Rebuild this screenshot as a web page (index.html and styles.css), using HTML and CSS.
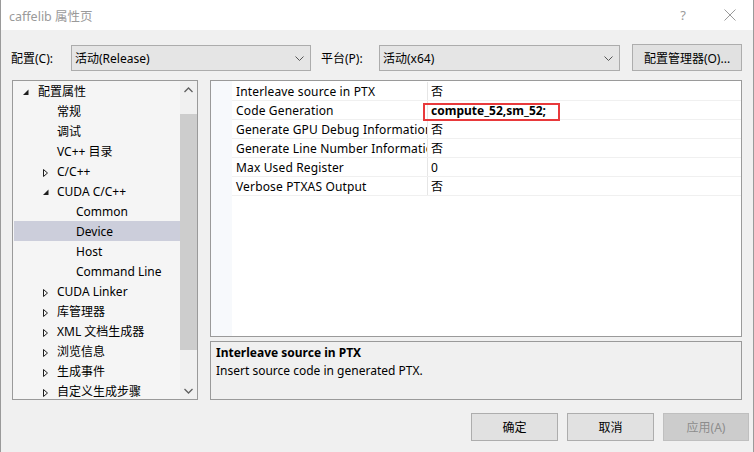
FILE: index.html
```html
<!DOCTYPE html>
<html>
<head>
<meta charset="utf-8">
<link rel="stylesheet" href="styles.css">
</head>
<body>
<div class="dialog">
  <div class="titlebar">
    <span class="title">caffelib 属性页</span>
    <span class="help">?</span>
    <svg class="close" width="12" height="12" viewBox="0 0 12 12"><path d="M0.5 0.5 L11.5 11.5 M11.5 0.5 L0.5 11.5" stroke="#9a9a9a" stroke-width="1" fill="none"/></svg>
  </div>
  <div class="body">
    <div class="toolbar">
      <span class="label l1">配置(C):</span>
      <div class="select s1"><span>活动(Release)</span><svg class="chev" width="9" height="5" viewBox="0 0 9 5"><path d="M0.5 0.5 L4.5 4.5 L8.5 0.5" stroke="#555" fill="none"/></svg></div>
      <span class="label l2">平台(P):</span>
      <div class="select s2"><span>活动(x64)</span><svg class="chev" width="9" height="5" viewBox="0 0 9 5"><path d="M0.5 0.5 L4.5 4.5 L8.5 0.5" stroke="#555" fill="none"/></svg></div>
      <div class="btn mgr">配置管理器(O)...</div>
    </div>
    <div class="main">
      <div class="tree">
        <div class="items">
          <div class="row lvl0"><span class="tw"><svg width="19" height="20"><polygon points="4,14 9.5,14 9.5,8.5" fill="#1e1e1e"/></svg></span>配置属性</div>
          <div class="row lvl1"><span class="tw"></span>常规</div>
          <div class="row lvl1"><span class="tw"></span>调试</div>
          <div class="row lvl1"><span class="tw"></span>VC++ 目录</div>
          <div class="row lvl1"><span class="tw"><svg width="19" height="20"><polygon points="5.5,8.5 5.5,15.5 9.5,12" fill="none" stroke="#1e1e1e"/></svg></span>C/C++</div>
          <div class="row lvl1"><span class="tw"><svg width="19" height="20"><polygon points="5,14 10.5,14 10.5,8.5" fill="#1e1e1e"/></svg></span>CUDA C/C++</div>
          <div class="row lvl2"><span class="tw"></span>Common</div>
          <div class="row lvl2 sel"><span class="tw"></span>Device</div>
          <div class="row lvl2"><span class="tw"></span>Host</div>
          <div class="row lvl2"><span class="tw"></span>Command Line</div>
          <div class="row lvl1"><span class="tw"><svg width="19" height="20"><polygon points="5.5,8.5 5.5,15.5 9.5,12" fill="none" stroke="#1e1e1e"/></svg></span>CUDA Linker</div>
          <div class="row lvl1"><span class="tw"><svg width="19" height="20"><polygon points="5.5,8.5 5.5,15.5 9.5,12" fill="none" stroke="#1e1e1e"/></svg></span>库管理器</div>
          <div class="row lvl1"><span class="tw"><svg width="19" height="20"><polygon points="5.5,8.5 5.5,15.5 9.5,12" fill="none" stroke="#1e1e1e"/></svg></span>XML 文档生成器</div>
          <div class="row lvl1"><span class="tw"><svg width="19" height="20"><polygon points="5.5,8.5 5.5,15.5 9.5,12" fill="none" stroke="#1e1e1e"/></svg></span>浏览信息</div>
          <div class="row lvl1"><span class="tw"><svg width="19" height="20"><polygon points="5.5,8.5 5.5,15.5 9.5,12" fill="none" stroke="#1e1e1e"/></svg></span>生成事件</div>
          <div class="row lvl1"><span class="tw"><svg width="19" height="20"><polygon points="5.5,8.5 5.5,15.5 9.5,12" fill="none" stroke="#1e1e1e"/></svg></span>自定义生成步骤</div>
        </div>
        <div class="scrollbar">
          <div class="arrow"><svg width="9" height="6" viewBox="0 0 9 6"><path d="M0.5 5 L4.5 1 L8.5 5" stroke="#606060" stroke-width="1.3" fill="none"/></svg></div>
          <div class="track"><div class="thumb"></div></div>
          <div class="arrow"><svg width="9" height="6" viewBox="0 0 9 6"><path d="M0.5 1 L4.5 5 L8.5 1" stroke="#606060" stroke-width="1.3" fill="none"/></svg></div>
        </div>
      </div>
      <div class="right">
        <div class="grid">
          <div class="gutter"></div>
          <div class="props">
            <div class="prow"><span class="name">Interleave source in PTX</span><span class="val">否</span></div>
            <div class="prow"><span class="name">Code Generation</span><span class="val bold">compute_52,sm_52;<span class="mark"></span></span></div>
            <div class="prow"><span class="name">Generate GPU Debug Information</span><span class="val">否</span></div>
            <div class="prow"><span class="name">Generate Line Number Information</span><span class="val">否</span></div>
            <div class="prow"><span class="name">Max Used Register</span><span class="val">0</span></div>
            <div class="prow"><span class="name">Verbose PTXAS Output</span><span class="val">否</span></div>
          </div>
        </div>
        <div class="desc">
          <div class="dtitle">Interleave source in PTX</div>
          <div class="dtext">Insert source code in generated PTX.</div>
        </div>
      </div>
    </div>
    <div class="buttons">
      <div class="btn ok">确定</div>
      <div class="btn cancel">取消</div>
      <div class="btn apply disabled">应用(A)</div>
    </div>
  </div>
</div>
</body>
</html>
```

FILE: styles.css
```css
* { box-sizing: border-box; }
html, body { margin: 0; padding: 0; }
body {
  width: 754px;
  height: 452px;
  overflow: hidden;
  background: #f0f0f0;
  font-family: "Noto Sans", "Noto Sans CJK SC", sans-serif;
  font-size: 12px;
  color: #000;
}
.dialog {
  width: 754px;
  height: 452px;
  border-left: 1px solid #9a9a9a;
  border-right: 1px solid #9a9a9a;
  background: #f0f0f0;
  display: flex;
  flex-direction: column;
}
.titlebar {
  height: 30px;
  background: #fff;
  display: flex;
  align-items: center;
  padding-left: 8px;
}
.title { color: #9a9a9a; font-size: 12.5px; flex: 1; }
.help { color: #9a9a9a; font-size: 13px; margin-right: 38px; }
.close { margin-right: 17px; }
.body {
  flex: 1;
  display: flex;
  flex-direction: column;
  padding: 14px 4px 0 11px;
}
.toolbar {
  height: 27px;
  display: flex;
  align-items: center;
}
.label { display: inline-block; padding-left: 0; }
.l1 { width: 60px; margin-left: -1px; }
.l2 { width: 58px; margin-left: 10px; }
.select {
  height: 26px;
  margin-top: 1px;
  border: 1px solid #acacac;
  background: #e5e5e5;
  display: flex;
  align-items: center;
  justify-content: space-between;
  padding: 0 6px 0 3px;
}
.s1 { width: 240px; }
.s2 { width: 241px; }
.btn {
  border: 1px solid #adadad;
  background: #e1e1e1;
  display: flex;
  align-items: center;
  justify-content: center;
}
.mgr { width: 110px; height: 27px; margin-left: 12px; }
.main {
  margin-top: 9px;
  height: 320px;
  display: flex;
}
.tree {
  width: 186px;
  height: 320px;
  border: 1px solid #9a9a9a;
  background: #f5f5f5;
  display: flex;
  overflow: hidden;
}
.items {
  flex: 1;
  padding-top: 0;
  padding-left: 1px;
  overflow: hidden;
}
.row {
  height: 20px;
  display: flex;
  align-items: center;
  white-space: nowrap;
}
.tw { width: 19px; height: 20px; flex: none; display: block; }
.tw svg { display: block; }
.lvl0 { padding-left: 5px; }
.lvl1 { padding-left: 24px; }
.lvl2 { padding-left: 43px; }
.sel { background: #cccedb; }
.scrollbar {
  width: 17px;
  background: #f0f0f0;
  display: flex;
  flex-direction: column;
}
.arrow {
  height: 17px;
  display: flex;
  align-items: center;
  justify-content: center;
}
.track { flex: 1; padding: 16px 0 32px 0; }
.thumb { width: 17px; height: 100%; background: #cdcdcd; }
.right {
  margin-left: 12px;
  width: 532px;
  display: flex;
  flex-direction: column;
}
.grid {
  height: 258px;
  border: 1px solid #9a9a9a;
  background: #fff;
  display: flex;
}
.gutter { width: 21px; background: #f7f9fc; }
.props { flex: 1; padding-top: 1px; }
.prow {
  height: 19px;
  display: flex;
  border-bottom: 1px solid #f0f0f0;
}
.name {
  width: 196px;
  padding-left: 4px;
  border-right: 1px solid #e6e6e6;
  white-space: nowrap;
  overflow: hidden;
  line-height: 20px;
  letter-spacing: 0.15px;
}
.val {
  flex: 1;
  padding-left: 3px;
  line-height: 20px;
  position: relative;
}
.bold { font-weight: bold; }
.mark {
  position: absolute;
  left: -5px;
  top: 2px;
  width: 137px;
  height: 18px;
  border: 2px solid #e8393b;
}
.desc {
  margin-top: 4px;
  height: 59px;
  border: 1px solid #9a9a9a;
  background: #f0f0f0;
  padding: 2px 5px;
}
.dtitle { font-weight: bold; line-height: 18px; }
.dtext { line-height: 18px; }
.buttons {
  margin-top: 13px;
  display: flex;
  justify-content: flex-end;
  gap: 9px;
}
.buttons .btn { width: 87px; height: 28px; }
.buttons .apply { width: 86px; }
.disabled { background: #cccccc; border-color: #bfbfbf; color: #8c8c8c; }
```
